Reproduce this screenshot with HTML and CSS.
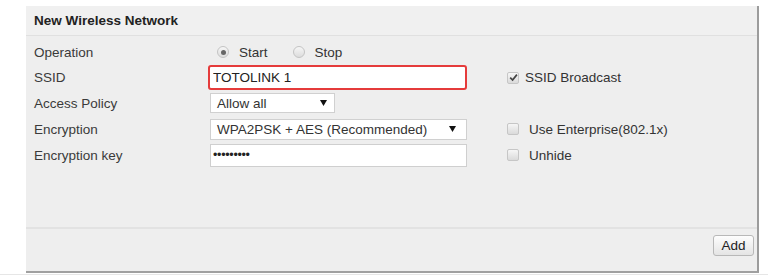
FILE: index.html
```html
<!DOCTYPE html>
<html lang="en">
<head>
    <meta charset="UTF-8">
    <meta name="viewport" content="width=device-width, initial-scale=1.0">
    <title>New Wireless Network</title>
    <link rel="stylesheet" href="styles.css">
</head>
<body>
    <div class="panel">
        <div class="panel-head">New Wireless Network</div>

        <div class="panel-body">
            <div class="row">
                <div class="label">Operation</div>
                <div class="field radios">
                    <label class="radio-opt"><span class="radio is-on"></span>Start</label>
                    <label class="radio-opt"><span class="radio"></span>Stop</label>
                </div>
                <div class="extra"></div>
            </div>

            <div class="row row-tight">
                <div class="label">SSID</div>
                <div class="field">
                    <input class="text-in text-in-alert" type="text" value="TOTOLINK 1">
                </div>
                <div class="extra">
                    <label class="check-opt check-opt-on">
                        <span class="check">
                            <svg width="9" height="9" viewBox="0 0 9 9"><path d="M1.2 4.6 L3.6 7 L7.9 1.6" fill="none" stroke="#444" stroke-width="1.7"/></svg>
                        </span>
                        SSID Broadcast
                    </label>
                </div>
            </div>

            <div class="row">
                <div class="label">Access Policy</div>
                <div class="field">
                    <div class="select select-short">
                        <span>Allow all</span>
                        <svg width="7" height="6" viewBox="0 0 7 6"><path d="M0 0 H7 L3.5 6 Z" fill="#111"/></svg>
                    </div>
                </div>
                <div class="extra"></div>
            </div>

            <div class="row">
                <div class="label">Encryption</div>
                <div class="field">
                    <div class="select">
                        <span>WPA2PSK + AES (Recommended)</span>
                        <svg width="7" height="6" viewBox="0 0 7 6"><path d="M0 0 H7 L3.5 6 Z" fill="#111"/></svg>
                    </div>
                </div>
                <div class="extra">
                    <label class="check-opt"><span class="check"></span>Use Enterprise(802.1x)</label>
                </div>
            </div>

            <div class="row">
                <div class="label">Encryption key</div>
                <div class="field">
                    <input class="text-in text-in-key" type="password" value="123456789">
                </div>
                <div class="extra">
                    <label class="check-opt"><span class="check"></span>Unhide</label>
                </div>
            </div>
        </div>

        <div class="panel-foot">
            <button class="btn" type="button">Add</button>
        </div>
    </div>
    <div class="page-rule"></div>
</body>
</html>
```

FILE: styles.css
```css
body {
    margin: 0;
    padding: 0;
    background-color: #fff;
    font-family: "Liberation Sans", Arial, sans-serif;
    font-size: 13.5px;
    color: #333;
}

.panel {
    width: 731px;
    margin: 6px 0 0 26px;
    background-color: #eeeeee;
    border-right: 2px solid #9c9c9c;
    border-bottom: 2px solid #a0a0a0;
}

.panel-head {
    height: 29px;
    line-height: 30px;
    padding-left: 8px;
    font-weight: bold;
    color: #222;
    background-color: #f0f0f0;
    border-bottom: 1px solid #e0e0e0;
}

.panel-body {
    padding: 3px 0 59px 8px;
}

.row {
    display: grid;
    grid-template-columns: 176px 257px 1fr;
    align-items: center;
    height: 26px;
}

.row-tight {
    height: 25px;
}

.label {
    color: #3a3a3a;
}

.field {
    display: flex;
    align-items: center;
}

.extra {
    padding-left: 40px;
}

/* radios */
.radios {
    padding-left: 7px;
}

.radio-opt {
    display: flex;
    align-items: center;
    gap: 10px;
    margin-right: 25px;
}

.radio {
    width: 10px;
    height: 10px;
    border: 1px solid #c4c4c4;
    border-radius: 50%;
    background: linear-gradient(#f6f6f6, #dcdcdc);
    position: relative;
}

.radio.is-on::after {
    content: "";
    position: absolute;
    left: 2.5px;
    top: 2.5px;
    width: 5px;
    height: 5px;
    border-radius: 50%;
    background-color: #666;
}

/* inputs */
.text-in {
    box-sizing: border-box;
    width: 257px;
    height: 23px;
    margin: 0;
    padding: 0 2px;
    border: 1px solid #cfcfcf;
    background-color: #fff;
    font-family: inherit;
    font-size: 13.5px;
    color: #222;
    outline: none;
}

.text-in-key {
    font-size: 12.5px;
    letter-spacing: -0.3px;
}

.text-in-alert {
    width: 259px;
    height: 25px;
    margin-left: -2px;
    padding: 0 3px;
    border: 2px solid #e53b3b;
    border-radius: 3px;
}

.select {
    box-sizing: border-box;
    display: flex;
    align-items: center;
    justify-content: space-between;
    width: 257px;
    height: 21px;
    padding: 0 10px 0 6px;
    border: 1px solid #d0d0d0;
    background-color: #fff;
    color: #333;
}

.select-short {
    width: 125px;
    height: 20px;
    padding-right: 7px;
}

/* checkboxes */
.check-opt {
    display: flex;
    align-items: center;
    gap: 10px;
}

.check-opt-on {
    gap: 6px;
}

.check {
    display: flex;
    align-items: center;
    justify-content: center;
    width: 10px;
    height: 10px;
    border: 1px solid #c6c6c6;
    border-radius: 2px;
    background: linear-gradient(#f6f6f6, #dadada);
}

/* footer */
.panel-foot {
    display: flex;
    justify-content: flex-end;
    height: 36px;
    padding: 6px 3px 0 0;
    border-top: 2px solid #e2e2e2;
}

.btn {
    width: 41px;
    height: 21px;
    padding: 0;
    border: 1px solid #b8b8b8;
    border-radius: 3px;
    background: linear-gradient(#fdfdfd, #e4e4e4);
    font-family: inherit;
    font-size: 13.5px;
    color: #222;
}

.page-rule {
    margin-top: 1px;
    border-top: 1px solid #e6e6e6;
}
```
